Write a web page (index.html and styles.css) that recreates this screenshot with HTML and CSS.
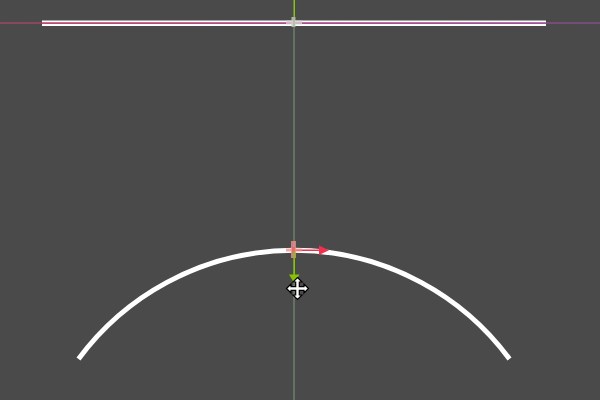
FILE: index.html
```html
<!DOCTYPE html>
<html>
<head>
<meta charset="utf-8">
<link rel="stylesheet" href="styles.css">
</head>
<body>
<div class="viewport">
  <svg class="scene" width="600" height="400" viewBox="0 0 600 400">
    <defs>
      <linearGradient id="xaxis" x1="0" y1="0" x2="600" y2="0" gradientUnits="userSpaceOnUse">
        <stop offset="0" stop-color="#c8466a"/>
        <stop offset="1" stop-color="#a050a6"/>
      </linearGradient>
    </defs>
    <!-- vertical axis -->
    <rect x="293.5" y="0" width="1.5" height="17" fill="#86c21a"/>
    <rect x="293.5" y="27" width="1" height="373" fill="#7c9a7a"/>
    <!-- horizontal axis line -->
    <rect x="0" y="22.5" width="600" height="1" fill="url(#xaxis)"/>
    <!-- white profile band -->
    <rect x="42" y="20.5" width="504" height="2" fill="#ffffff"/>
    <rect x="42" y="24" width="504" height="2" fill="#ffffff"/>
    <rect x="42" y="22.5" width="504" height="1.5" fill="url(#xaxis)"/>
    <!-- top handle -->
    <rect x="291.5" y="17" width="4" height="10" fill="#c9c4c6" opacity="0.85"/>
    <rect x="286" y="20.5" width="16" height="4" fill="#d6ced2" opacity="0.8"/>
    <rect x="293.5" y="17" width="1" height="10" fill="#9ab87a"/>
    <!-- arc -->
    <path d="M 78.5 359 A 268 268 0 0 1 509.5 359" fill="none" stroke="#ffffff" stroke-width="5"/>
    <!-- red X arrow -->
    <rect x="294" y="249.5" width="26" height="1.5" fill="#f0304e"/>
    <polygon points="319,245.5 329,250.2 319,255" fill="#f0304e"/>
    <!-- pink handle -->
    <rect x="291" y="241" width="5" height="17" fill="#e89090" opacity="0.8"/>
    <rect x="286" y="248.5" width="16" height="3" fill="#f08a8a" opacity="0.75"/>
    <rect x="292" y="247" width="3" height="6" fill="#e86a6a"/>
    <!-- green Y arrow -->
    <rect x="293.5" y="251" width="1.5" height="25" fill="#84c400"/>
    <polygon points="289,274.5 299.5,274.5 294.2,283" fill="#84c400"/>
    <!-- move cursor -->
    <g transform="translate(297.5 288.5)">
      <path d="M0,-11 L4.5,-6.5 L1.8,-6.5 L1.8,-1.8 L6.5,-1.8 L6.5,-4.5 L11,0 L6.5,4.5 L6.5,1.8 L1.8,1.8 L1.8,6.5 L4.5,6.5 L0,11 L-4.5,6.5 L-1.8,6.5 L-1.8,1.8 L-6.5,1.8 L-6.5,4.5 L-11,0 L-6.5,-4.5 L-6.5,-1.8 L-1.8,-1.8 L-1.8,-6.5 L-4.5,-6.5 Z" fill="#ffffff" stroke="#000000" stroke-width="1.2" stroke-linejoin="miter"/>
    </g>
  </svg>
</div>
</body>
</html>
```

FILE: styles.css
```css
html, body {
  margin: 0;
  padding: 0;
  background: #4a4a4a;
}
.viewport {
  position: relative;
  width: 600px;
  height: 400px;
  overflow: hidden;
  background: #4a4a4a;
}
.scene {
  display: block;
}
```
